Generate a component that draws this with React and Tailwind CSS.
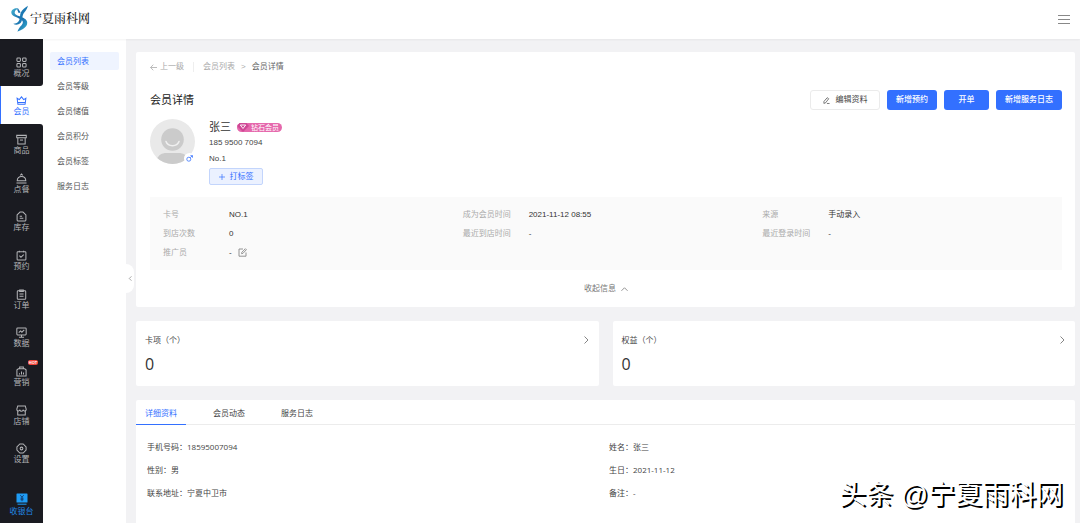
const icons = {
  overview: (
    <>
      <rect x="1" y="1" width="3.8" height="3.8" rx="0.9" />
      <rect x="7.2" y="1" width="3.8" height="3.8" rx="0.9" />
      <rect x="1" y="7.2" width="3.8" height="3.8" rx="0.9" />
      <rect x="7.2" y="7.2" width="3.8" height="3.8" rx="0.9" />
    </>
  ),
  member: (
    <>
      <path d="M1.200 3.600 3.600 5 6 2l2.400 3 2.400-1.400-.9 6.600H2.100z" />
      <path d="M2 8.200h8" />
    </>
  ),
  goods: (
    <>
      <path d="M.8 1.500h10.400v2.700H.8zM2 4.200v6.800h8V4.200" />
      <path d="M4.300 6.600h3.400" />
    </>
  ),
  dish: (
    <>
      <path d="M1.300 8.500C1.300 5.600 3.300 3.800 6 3.800s4.700 1.800 4.700 4.700zM.5 10.800h11" />
      <path d="M4.700 2.600 6 1.200l1.300 1.400" />
    </>
  ),
  stock: (
    <>
      <path d="M1.200 4.200 4.400 1.200h3.200l3.200 3V9.800a1.200 1.200 0 0 1-1.200 1.200H2.400a1.200 1.200 0 0 1-1.200-1.200z" />
      <path d="M4 5.600h2.600M4 8h4" />
    </>
  ),
  booking: (
    <>
      <rect x="1.200" y="1.800" width="9.600" height="9.200" rx="0.9" />
      <path d="M3.700.8v1.600M8.300.8v1.600M3.700 6.200l1.700 1.800 3-3" />
    </>
  ),
  order: (
    <>
      <rect x="1.400" y="1.800" width="9.200" height="9.400" rx="0.9" />
      <path d="M4 1h4v1.800H4zM3.800 5.500h4.400M3.800 8h4.400" />
    </>
  ),
  data: (
    <>
      <rect x="0.9" y="1" width="10.200" height="7.600" rx="0.9" />
      <path d="M3 6.200 5 4.300l1.400 1.400L9 3.200M6 8.600V11M3.200 11.200h5.600" />
    </>
  ),
  market: (
    <>
      <path d="M1 4.200 2.500 3h7L11 4.200V11H1zM4 3V1h4v2" />
      <path d="M3.800 8v1.400M6 6v3.400M8.200 7.200v2.200" />
    </>
  ),
  shop: (
    <>
      <path d="M1.900 1h8.200l1 3.600a1.600 1.600 0 0 1-3.400.5 1.700 1.700 0 0 1-3.400 0 1.600 1.600 0 0 1-3.400-.5z" />
      <path d="M1.900 6.500V11h8.200V6.500" />
    </>
  ),
  setting: (
    <>
      <path d="M4.200 1h3.600l3.200 3.300v3.400L7.800 11H4.200L1 7.700V4.300z" />
      <circle cx="6" cy="6" r="1.500" />
    </>
  ),
};

const navItems = [
  { icon: "overview", label: "概况" },
  { icon: "member", label: "会员", active: true },
  { icon: "goods", label: "商品" },
  { icon: "dish", label: "点餐" },
  { icon: "stock", label: "库存" },
  { icon: "booking", label: "预约" },
  { icon: "order", label: "订单" },
  { icon: "data", label: "数据" },
  { icon: "market", label: "营销", hot: true },
  { icon: "shop", label: "店铺" },
  { icon: "setting", label: "设置" },
];

const subItems = ["会员列表", "会员等级", "会员储值", "会员积分", "会员标签", "服务日志"];

const info = [
  [
    { label: "卡号", value: "NO.1" },
    { label: "到店次数", value: "0" },
    { label: "推广员", value: "-", editable: true },
  ],
  [
    { label: "成为会员时间", value: "2021-11-12 08:55" },
    { label: "最近到店时间", value: "-" },
  ],
  [
    { label: "来源", value: "手动录入" },
    { label: "最近登录时间", value: "-" },
  ],
];

const details = ["手机号码：18595007094", "姓名：张三", "性别：男", "生日：2021-11-12", "联系地址：宁夏中卫市", "备注：-"];

const Chevron = ({ className }) => (
  <svg viewBox="0 0 8 8" className={className} fill="none" stroke="currentColor" strokeWidth="0.9">
    <path d="M2.500.5 6 4 2.500 7.500" />
  </svg>
);

const Header = () => (
  <header className="relative z-10 flex h-[39px] shrink-0 items-center justify-between bg-white px-[10px] pb-[2px] shadow-xs">
    <a href="#home" className="flex items-center text-[#222]">
      <svg viewBox="0 0 20 28" className="h-7 w-5" fill="none">
        <defs>
          <linearGradient id="ribbon" x1="0" y1="0" x2="1" y2="1">
            <stop offset="0" stopColor="#45b5d2" />
            <stop offset="0.5" stopColor="#1765a8" />
            <stop offset="1" stopColor="#35b5d2" />
          </linearGradient>
        </defs>
        <path
          d="M8.500 3.500C5 2.600 1.200 4.600 1.300 7.600c.1 3 3.700 4.300 7.200 5.600 3 1.100 4.800 2.500 4.300 4.800-.5 2.300-4.300 4.400-5.300 8.800 1.600-1.300 3.500-1.600 5.500-2.900 2.800-1.800 4.600-4.100 4.200-6.700-.5-3-3.800-4.300-7-5.600C7.100 10.400 4.400 9.700 4.700 7.300c.2-1.700 1.800-3 3.800-3.800z"
          fill="url(#ribbon)"
        />
        <path
          d="M17.800.8c-2.600 2.200-5.600 3.800-7 6.700-1.200 2.600-.3 5.200-1.700 8-1.200 2.300-3.300 3-5.800 3.300 1.700 1.200 5 1.300 7-.5 2.300-2.100 1.600-5.200 2.600-8.300.8-2.700 4.500-4.900 4.900-9.200z"
          fill="#1d79b3"
        />
        <path d="M8.300 3.800 10.600 7.500l-2 .5-1.500-3.400z" fill="#1a6fae" />
      </svg>
      <span className="font-['Liberation_Serif','Noto_Serif_CJK_SC','Noto_Sans_CJK_SC',serif] text-[12px] leading-4 font-medium">
        宁夏雨科网
      </span>
    </a>
    <button type="button" aria-label="菜单" className="text-[#888]">
      <svg viewBox="0 0 12 10" className="h-[10px] w-3" stroke="currentColor">
        <path d="M0 1.500h12M0 5.500h12M0 9.500h12" />
      </svg>
    </button>
  </header>
);

const Sidebar = () => (
  <nav className="flex w-[43px] shrink-0 flex-col bg-white">
    <div className="h-2 bg-[#1a1b21]" />
    <div className="flex h-[425px] flex-col">
      {navItems.map((item, i) => (
        <a
          key={item.label}
          href={`#${item.icon}`}
          className={`relative flex flex-1 flex-col items-center justify-center pt-1 ${
            item.active ? "bg-white text-[#3370ff] shadow-[inset_1px_0_0_#3370ff]" : "bg-[#1a1b21] text-[#b4b5b8]"
          } ${i === 0 ? "rounded-br-[3px]" : ""} ${i === 2 ? "rounded-tr-[3px]" : ""}`}
        >
          <svg viewBox="0 0 12 12" className="h-[11px] w-[11px]" fill="none" stroke="currentColor" strokeWidth="1.100">
            {icons[item.icon]}
          </svg>
          <span className="leading-3">{item.label}</span>
          {item.hot && (
            <span className="absolute top-1 right-[5px] h-[5px] w-[10px] rounded-xs bg-[#f0443a] text-center text-[4px] leading-[5px] font-bold text-white">
              HOT
            </span>
          )}
        </a>
      ))}
    </div>
    <div className="flex flex-1 flex-col items-center justify-end bg-[#1a1b21] pt-4 pb-1 text-[#2188e8]">
      <a href="#cashier" className="flex flex-col items-center">
        <svg viewBox="0 0 12 12" className="h-3 w-3">
          <rect x="0.500" y="0.500" width="11" height="9" rx="0.600" fill="#1f9cf5" />
          <path d="M1.500 11.200h9" stroke="#1f9cf5" strokeWidth="1" />
          <path d="M4.300 2.200 6 4.200l1.700-2M6 4.200v4M4.500 5.200h3M4.500 6.700h3" stroke="#123a6b" strokeWidth="0.900" fill="none" />
        </svg>
        <span className="leading-[14px]">收银台</span>
      </a>
    </div>
  </nav>
);

const SubMenu = () => (
  <nav className="flex w-[83px] shrink-0 flex-col gap-[7px] bg-white px-[7px] pt-[13px]">
    {subItems.map((label, i) => (
      <a
        key={label}
        href={`#sub-${i}`}
        className={`h-[18px] rounded-xs pl-[7px] leading-[19px] ${i === 0 ? "bg-[#eff4ff] text-[#3370ff]" : "text-[#555]"}`}
      >
        {label}
      </a>
    ))}
  </nav>
);

const Profile = () => (
  <div className="mt-[9px] flex gap-[14px]">
    <div className="relative h-[45px] w-[45px]">
      <svg viewBox="0 0 45 45" className="h-[45px] w-[45px]">
        <clipPath id="face">
          <circle cx="22.500" cy="22.500" r="22.500" />
        </clipPath>
        <g clipPath="url(#face)">
          <rect width="45" height="45" fill="#e9e9e9" />
          <path d="M7 40c1.500-4 5-6 9-6h13c4 0 7.500 2 9 6v5H7z" fill="#cbcbcb" />
          <circle cx="22.500" cy="20.500" r="12.300" fill="#e9e9e9" />
          <circle cx="22.500" cy="20.500" r="11.300" fill="#cbcbcb" />
          <path d="M16 22.500c2 5.500 11 5.500 13 0" fill="none" stroke="#f0f0f0" strokeWidth="1.500" strokeLinecap="round" />
        </g>
      </svg>
      <span className="absolute right-0 bottom-0 flex h-[11px] w-[11px] items-center justify-center rounded-full bg-white text-[#3370ff]">
        <svg viewBox="0 0 8 8" className="h-[7px] w-[7px]" fill="none" stroke="currentColor" strokeWidth="0.900">
          <circle cx="3.200" cy="4.800" r="2.300" />
          <path d="M4.900 3.100 7.300.8M5 .8h2.400v2.300" />
        </svg>
      </span>
    </div>
    <div>
      <div className="flex items-center gap-[6px]">
        <span className="text-[11px] leading-4 text-[#333]">张三</span>
        <span className="flex h-[9px] items-center gap-[2px] rounded-full bg-[#e568ac] pr-[3px] text-[7px] leading-[9px] text-white">
          <svg viewBox="0 0 12 9" className="h-[9px] w-3">
            <path d="M2.500 0h7L12 3 6 9 0 3z" fill="#cf4795" />
            <path d="M3.300 2 6 5.500 8.700 2M3.300 2h5.400" fill="none" stroke="#fff" strokeWidth="0.900" />
          </svg>
          钻石会员
        </span>
      </div>
      <p className="leading-4">185 9500 7094</p>
      <p className="leading-[15px]">No.1</p>
      <button
        type="button"
        className="mt-[2px] flex h-[17px] w-[54px] items-center justify-center gap-[5px] rounded-xs border border-[#c3d5fc] bg-[#ebf1ff] text-[#3370ff]"
      >
        <svg viewBox="0 0 6 6" className="h-[6px] w-[6px]" stroke="currentColor" strokeWidth="0.700">
          <path d="M3 0v6M0 3h6" />
        </svg>
        打标签
      </button>
    </div>
  </div>
);

const MemberCard = () => (
  <section className="rounded-xs bg-white pt-[7px] pr-[13px] pb-[10px] pl-[14px]">
    <div className="flex h-4 items-center text-[#aaa]">
      <a href="#back" className="flex items-center gap-[3px]">
        <svg viewBox="0 0 8 8" className="h-[7px] w-[7px]" fill="none" stroke="currentColor" strokeWidth="0.900">
          <path d="M3.700.8.700 4l3 3.200M.7 4H8" />
        </svg>
        上一级
      </a>
      <span className="mx-[9px] h-[10px] w-px bg-[#eee]" />
      <a href="#list">会员列表</a>
      <span className="mx-[6px]">&gt;</span>
      <span className="text-[#666]">会员详情</span>
    </div>
    <div className="mt-[15px] flex h-5 items-center gap-[7px]">
      <h1 className="flex-1 text-[11px] leading-5 text-[#222]">会员详情</h1>
      <button type="button" className="flex h-5 w-[70px] items-center justify-center gap-[6px] rounded-[3px] border border-[#ebebeb] text-[#444]">
        <svg viewBox="0 0 8 8" className="h-[7px] w-[7px]" fill="none" stroke="currentColor" strokeWidth="0.800">
          <path d="M4.800.8 6.500 2 3 6.600 1 7.300l.1-2.200zM4.500 7.400h3" />
        </svg>
        编辑资料
      </button>
      <button type="button" className="h-5 w-[50px] rounded-[3px] bg-[#3370ff] font-medium text-white">新增预约</button>
      <button type="button" className="h-5 w-[45px] rounded-[3px] bg-[#3370ff] font-medium text-white">开单</button>
      <button type="button" className="h-5 w-[66px] rounded-[3px] bg-[#3370ff] font-medium text-white">新增服务日志</button>
    </div>
    <Profile />
    <div className="mt-3 grid grid-cols-3 bg-[#fafafa] py-2 pl-[13px]">
      {info.map((column, i) => (
        <dl key={i}>
          {column.map((row) => (
            <div key={row.label} className="flex leading-[19px]">
              <dt className="w-[66px] text-[#aaa]">{row.label}</dt>
              <dd className="flex items-center gap-[6px] text-[#333]">
                {row.value}
                {row.editable && (
                  <button type="button" aria-label="编辑推广员" className="text-[#888]">
                    <svg viewBox="0 0 9 9" className="h-[9px] w-[9px]" fill="none" stroke="currentColor" strokeWidth="0.900">
                      <path d="M5 1H1v7.200h7V4.500M3.600 5.700l.2-1.400L7.400.7l1 1-3.500 3.700z" />
                    </svg>
                  </button>
                )}
              </dd>
            </div>
          ))}
        </dl>
      ))}
    </div>
    <button type="button" className="mx-auto mt-[11px] flex h-4 items-center gap-[5px] text-[#777]">
      收起信息
      <Chevron className="h-[7px] w-[7px] -rotate-90" />
    </button>
  </section>
);

const CountCard = ({ title, count }) => (
  <section className="flex-1 rounded-xs bg-white px-[9px] pt-[11px] pb-[10px] font-['Open_Sans','Noto_Sans_CJK_SC',sans-serif]">
    <div className="flex h-4 items-center justify-between">
      <h2>{title}</h2>
      <Chevron className="h-2 w-2 text-[#777]" />
    </div>
    <p className="mt-1 text-[16px] leading-6 text-[#333]">{count}</p>
  </section>
);

const DetailCard = () => (
  <section className="flex-1 rounded-t-xs bg-white font-['Open_Sans','Noto_Sans_CJK_SC',sans-serif]">
    <div role="tablist" className="flex gap-[18px] border-b border-[#ececec]">
      {["详细资料", "会员动态", "服务日志"].map((tab, i) => (
        <button
          key={tab}
          type="button"
          role="tab"
          aria-selected={i === 0}
          className={`-mb-px h-[25px] px-[9px] ${i === 0 ? "text-[#3370ff] shadow-[inset_0_-1px_0_#3370ff]" : ""}`}
        >
          {tab}
        </button>
      ))}
    </div>
    <div className="grid grid-cols-2 pt-[10px] pr-1 pb-4 pl-[11px]">
      {details.map((text) => (
        <p key={text} className="leading-[23px]">
          {text}
        </p>
      ))}
    </div>
  </section>
);

const App = () => {
  return (
    <div className="flex min-h-screen flex-col bg-[#f2f2f4] font-['Liberation_Sans','Noto_Sans_CJK_SC',sans-serif] text-[8px] text-[#444]">
      <Header />
      <div className="flex flex-1">
        <Sidebar />
        <SubMenu />
        <main className="relative flex min-w-0 flex-1 flex-col gap-[14px] pt-[13px] pr-[5px] pl-[10px]">
          <button
            type="button"
            aria-label="收起菜单"
            className="absolute top-[225px] left-0 flex h-[29px] w-2 items-center justify-center rounded-r-lg bg-white text-[#666]"
          >
            <Chevron className="h-[5px] w-[5px] rotate-180" />
          </button>
          <MemberCard />
          <div className="flex gap-[14px]">
            <CountCard title="卡项（个）" count={0} />
            <CountCard title="权益（个）" count={0} />
          </div>
          <DetailCard />
          <p className="absolute right-[17px] bottom-2 text-[27px] leading-10 text-white [text-shadow:2px_2px_0_#000]">
            头条 @宁夏雨科网
          </p>
        </main>
      </div>
    </div>
  );
};

export default App;
